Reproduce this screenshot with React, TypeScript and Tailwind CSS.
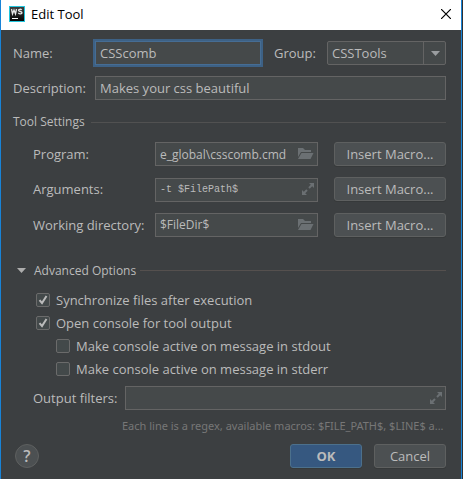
import { useState } from "react";
import type { ReactNode } from "react";

const fieldBox =
  "h-6 w-full min-w-0 border border-[#646464] bg-[#45494a] px-1 leading-5 text-[#bbbbbb] outline-none";
const grayButton =
  "h-6 rounded-[3px] border border-[#5e6060] bg-[#4c5052] text-[13px] leading-5 text-[#bbbbbb] shadow-[0_1px_0_#36393a]";

function FolderIcon() {
  return (
    <svg width="16" height="12" viewBox="0 0 16 12" fill="#6b7073" aria-hidden="true">
      <path d="M0 0h5l2 2h6v2H3L0 9z" />
      <path d="M3.500 5H15.500L12.500 11H0z" />
    </svg>
  );
}

function ExpandIcon() {
  return (
    <svg width="12" height="12" viewBox="0 0 12 12" fill="#6b7073" aria-hidden="true">
      <path d="M7 0h5v5l-1.800-1.800L7.700 5.700l-1.400-1.400 2.500-2.500z" />
      <path d="M5 12H0V7l1.800 1.800 2.500-2.500 1.400 1.400-2.500 2.500z" />
    </svg>
  );
}

function IconField({ id, value, icon, textStyle }: { id: string; value: string; icon: ReactNode; textStyle: string }) {
  return (
    <div className="relative min-w-0 flex-1">
      <input id={id} defaultValue={value} className={`${fieldBox} pr-6 ${textStyle}`} />
      <span className="pointer-events-none absolute inset-y-0 right-1 flex items-center">{icon}</span>
    </div>
  );
}

function SettingRow({
  id,
  label,
  value,
  icon,
  textStyle,
}: {
  id: string;
  label: string;
  value: string;
  icon: ReactNode;
  textStyle: string;
}) {
  return (
    <div className="flex items-center">
      <label htmlFor={id} className="w-[122px] shrink-0 whitespace-nowrap">
        {label}
      </label>
      <IconField id={id} value={value} icon={icon} textStyle={textStyle} />
      <button type="button" className={`${grayButton} ml-4 w-28 shrink-0`}>
        Insert Macro...
      </button>
    </div>
  );
}

function Check({ label, on, nested }: { label: string; on?: boolean; nested?: boolean }) {
  const [checked, setChecked] = useState(Boolean(on));
  return (
    <label className={nested ? "ml-5 flex h-[23px] items-center" : "flex h-[23px] items-center"}>
      <span className="relative mr-1.5 flex size-3.5">
        <input
          type="checkbox"
          checked={checked}
          onChange={(e) => setChecked(e.target.checked)}
          className="size-3.5 appearance-none rounded-[2px] border border-[#6b6b6b] bg-[#43494a]"
        />
        {checked && (
          <svg className="pointer-events-none absolute inset-0" width="14" height="14" viewBox="0 0 14 14" fill="none" stroke="#bbbbbb" strokeWidth="2" aria-hidden="true">
            <path d="M3.500 7.200L6 10l4.500-7" />
          </svg>
        )}
      </span>
      {label}
    </label>
  );
}

export default function App() {
  return (
    <div className="min-h-screen bg-[#2f3133] pr-px">
      <div className="min-h-screen border-x border-[#1883d7] bg-[#3c3f41] font-['Open_Sans','Noto_Sans',sans-serif] text-[13px] leading-5 text-[#bbbbbb]">
        <header className="flex h-[30px] items-center bg-white pr-2.5 pb-0.5 pl-2 text-black">
          <svg width="16" height="16" viewBox="0 0 16 16" aria-hidden="true">
            <defs>
              <linearGradient id="tile" x1="0" y1="0" x2="0" y2="1">
                <stop offset="0" stopColor="#3c3c3c" />
                <stop offset="1" stopColor="#050505" />
              </linearGradient>
            </defs>
            <rect width="16" height="16" fill="#22c4dc" />
            <rect x="1" y="1" width="14" height="14" fill="url(#tile)" />
            <path d="M2.500 3l1 5L5 4l1.500 4 1-5M12.800 3.900c-1-1-3.300-.8-3.300.4 0 1.500 3.500.9 3.500 2.400 0 1.400-2.500 1.500-3.700.4" fill="none" stroke="#e8e8e8" strokeWidth="1.300" />
            <path d="M3 12h6v1H3z" fill="#fff" />
          </svg>
          <h1 className="ml-1.5 text-[13px]">Edit Tool</h1>
          <button type="button" aria-label="Close" className="ml-auto">
            <svg width="10" height="10" viewBox="0 0 10 10" stroke="#000" strokeWidth="1.200" aria-hidden="true">
              <path d="M0 0l10 10M10 0L0 10" />
            </svg>
          </button>
        </header>

        <form className="pt-[11px] pr-[15px] pb-2.5 pl-3" onSubmit={(e) => e.preventDefault()}>
          <div className="flex items-center">
            <label htmlFor="name" className="w-[82px] shrink-0">
              Name:
            </label>
            <div className="min-w-0 flex-1">
              <input
                id="name"
                defaultValue="CSScomb"
                className="block h-6 w-full border border-[#466d94] bg-[#45494a] px-1 text-[13px] leading-5 ring-2 ring-[#3d6185] outline-none"
              />
            </div>
            <label htmlFor="group" className="ml-[13px] w-[53px] shrink-0">
              Group:
            </label>
            <div className="relative w-[119px] shrink-0">
              <select
                id="group"
                className="block h-6 w-full appearance-none rounded-[2px] border border-[#646464] bg-[#45494a] px-1 text-[13px] leading-5 outline-none"
              >
                <option>CSSTools</option>
              </select>
              <span className="pointer-events-none absolute inset-y-0 right-0 flex w-[23px] items-center justify-center border-l border-[#646464]">
                <svg width="9" height="5" viewBox="0 0 9 5" fill="#9a9da0" aria-hidden="true">
                  <path d="M0 0h9L4.500 5z" />
                </svg>
              </span>
            </div>
          </div>

          <div className="mt-[11px] flex items-center">
            <label htmlFor="description" className="w-[82px] shrink-0">
              Description:
            </label>
            <input id="description" defaultValue="Makes your css beautiful" className={`${fieldBox} text-[13px]`} />
          </div>

          <fieldset className="mt-3">
            <legend className="flex w-full items-center text-xs leading-5">
              Tool Settings
              <span className="ml-1.5 h-px flex-1 bg-[#515151]" />
            </legend>
            <div className="flex flex-col gap-[11px] pt-2.5 pl-5">
              <SettingRow id="program" label="Program:" value="e_global\csscomb.cmd" icon={<FolderIcon />} textStyle="text-xs" />
              <SettingRow
                id="arguments"
                label="Arguments:"
                value="-t $FilePath$"
                icon={<ExpandIcon />}
                textStyle="font-['Liberation_Mono',monospace] text-[10px]"
              />
              <SettingRow id="directory" label="Working directory:" value="$FileDir$" icon={<FolderIcon />} textStyle="text-xs" />
            </div>
          </fieldset>

          <button type="button" aria-expanded="true" className="mt-6 flex w-full items-center pl-1 text-xs leading-5">
            <svg width="9" height="5" viewBox="0 0 9 5" fill="#adadad" aria-hidden="true">
              <path d="M0 0h9L4.500 5z" />
            </svg>
            <span className="ml-2">Advanced Options</span>
            <span className="ml-1 h-px flex-1 bg-[#55504e]" />
          </button>

          <div className="mt-2 pl-[23px]">
            <Check label="Synchronize files after execution" on />
            <Check label="Open console for tool output" on />
            <Check label="Make console active on message in stdout" nested />
            <Check label="Make console active on message in stderr" nested />
          </div>

          <div className="mt-[5px] flex items-center pl-5">
            <label htmlFor="filters" className="w-[92px] shrink-0">
              Output filters:
            </label>
            <IconField id="filters" value="" icon={<ExpandIcon />} textStyle="text-xs" />
          </div>
          <p className="mt-1.5 -mr-1 ml-[109px] font-['Noto_Sans',sans-serif] text-[11px] leading-5 whitespace-nowrap text-[#777777]">
            Each line is a regex, available macros: $FILE_PATH$, $LINE$ a...
          </p>

          <div className="mt-2 flex items-center gap-3 pl-0.5">
            <button type="button" aria-label="Help" className="mr-auto flex size-6 items-center justify-center rounded-full border border-[#5e6060] bg-[#4c5052] text-base font-semibold">
              ?
            </button>
            <button type="submit" className="h-6 w-[72px] rounded-[3px] border border-[#4c708c] bg-[#365880] text-[13px] leading-5 font-bold shadow-[0_1px_0_#36393a]">
              OK
            </button>
            <button type="button" className={`${grayButton} w-[72px]`}>
              Cancel
            </button>
          </div>
        </form>
      </div>
    </div>
  );
}
